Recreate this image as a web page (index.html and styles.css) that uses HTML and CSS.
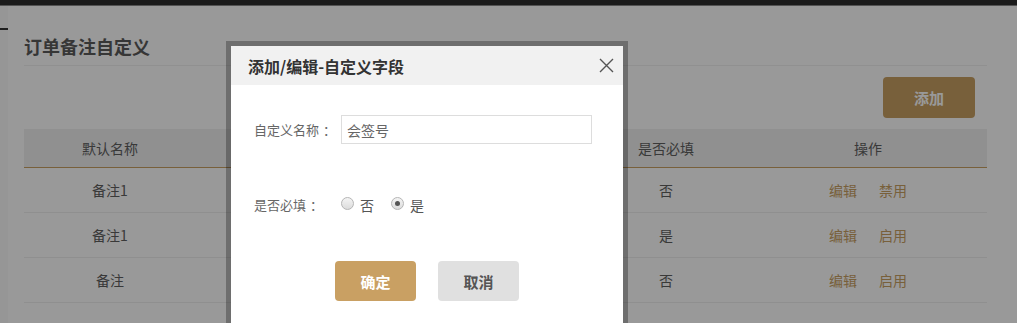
FILE: index.html
```html
<!DOCTYPE html>
<html lang="zh-CN">
<head>
    <meta charset="UTF-8">
    <meta name="viewport" content="width=device-width, initial-scale=1.0">
    <title>订单备注自定义</title>
    <link rel="stylesheet" href="styles.css">
</head>
<body>
    <div class="topbar"></div>

    <div class="layout">
        <aside class="side">
            <div class="side-item"></div>
        </aside>

        <main class="content">
            <h2 class="page-title">订单备注自定义</h2>

            <div class="toolbar">
                <button class="btn btn-add">添加</button>
            </div>

            <!-- middle columns sit under the dialog -->
            <table class="grid">
                <colgroup>
                    <col style="width: 172px">
                    <col style="width: 194px">
                    <col style="width: 193px">
                    <col style="width: 166px">
                    <col>
                </colgroup>
                <thead>
                    <tr>
                        <th>默认名称</th>
                        <th></th>
                        <th></th>
                        <th>是否必填</th>
                        <th>操作</th>
                    </tr>
                </thead>
                <tbody>
                    <tr>
                        <td>备注1</td>
                        <td></td>
                        <td></td>
                        <td>否</td>
                        <td><a class="op" href="#">编辑</a><a class="op" href="#">禁用</a></td>
                    </tr>
                    <tr>
                        <td>备注1</td>
                        <td></td>
                        <td></td>
                        <td>是</td>
                        <td><a class="op" href="#">编辑</a><a class="op" href="#">启用</a></td>
                    </tr>
                    <tr>
                        <td>备注</td>
                        <td></td>
                        <td></td>
                        <td>否</td>
                        <td><a class="op" href="#">编辑</a><a class="op" href="#">启用</a></td>
                    </tr>
                </tbody>
            </table>
        </main>
    </div>

    <!-- modal -->
    <div class="mask"></div>
    <div class="dialog">
        <div class="dialog-head">
            <span class="dialog-title">添加/编辑-自定义字段</span>
            <button class="dialog-close" aria-label="关闭">
                <svg width="15" height="15" viewBox="0 0 15 15">
                    <path d="M1 1 L14 14 M14 1 L1 14" stroke="#555" stroke-width="1.4" fill="none"/>
                </svg>
            </button>
        </div>
        <div class="dialog-body">
            <div class="form-row">
                <label class="form-label" for="custom_name">自定义名称<span class="colon">：</span></label>
                <input class="form-input" type="text" id="custom_name" value="会签号">
            </div>
            <div class="form-row">
                <span class="form-label">是否必填<span class="colon">：</span></span>
                <label class="radio"><input type="radio" name="required"> 否</label>
                <label class="radio"><input type="radio" name="required" checked> 是</label>
            </div>
            <div class="dialog-actions">
                <button class="btn btn-ok">确定</button>
                <button class="btn btn-cancel">取消</button>
            </div>
        </div>
    </div>
</body>
</html>
```

FILE: styles.css
```css
* {
    margin: 0;
    padding: 0;
    box-sizing: border-box;
}

body {
    font-family: "Noto Sans CJK SC", "Noto Sans", sans-serif;
    background: #fff;
    color: #666;
    font-size: 14px;
    overflow: hidden;
}

.topbar {
    height: 6px;
    background: #2e2e2e;
    border-bottom: 1px solid #8a8a8a;
}

.layout {
    display: flex;
    min-height: 317px;
}

.side {
    width: 9px;
    border-right: 1px solid #fff;
    background: #fafafa;
    padding-top: 22px;
}

.side-item {
    height: 2px;
    background: #333;
}

.content {
    flex: 1;
    padding: 28px 30px 0 15px;
}

.page-title {
    font-size: 18px;
    line-height: 24px;
    font-weight: 700;
    color: #5a5a5a;
    padding-bottom: 7px;
    border-bottom: 1px solid #f0f0f0;
}

.toolbar {
    display: flex;
    justify-content: flex-end;
    padding: 11px 12px 0 0;
    margin-bottom: 11px;
}

.btn {
    border: none;
    border-radius: 4px;
    font-family: inherit;
    font-size: 15px;
    font-weight: 700;
    cursor: pointer;
}

.btn-add {
    width: 92px;
    height: 41px;
    background: #c9a063;
    color: #fff;
}

.grid {
    width: 100%;
    border-collapse: collapse;
    table-layout: fixed;
    text-align: center;
}

.grid th {
    height: 38px;
    background: #f0f0f0;
    font-weight: 400;
    color: #606060;
    border-bottom: 1px solid #c9a063;
}

.grid td {
    height: 45px;
    border-bottom: 1px solid #efefef;
    color: #606060;
}

.op {
    color: #c9a063;
    text-decoration: none;
    margin: 0 11px;
}

/* modal */
.mask {
    position: fixed;
    inset: 0;
    background: rgba(0, 0, 0, 0.4);
}

.dialog {
    position: absolute;
    left: 226px;
    top: 41px;
    width: 402px;
    height: 320px;
    border: 5px solid rgba(0, 0, 0, 0.28);
    background-clip: padding-box;
    background-color: #fff;
}

.dialog-head {
    height: 39px;
    background: #f1f1f1;
    display: flex;
    align-items: center;
    justify-content: space-between;
    padding: 0 9px 0 17px;
}

.dialog-title {
    font-size: 16px;
    font-weight: 700;
    color: #333;
}

.dialog-close {
    border: none;
    background: none;
    display: flex;
    cursor: pointer;
}

.dialog-body {
    padding: 30px 0 0 23px;
}

.form-row {
    display: flex;
    align-items: center;
    height: 29px;
    margin-bottom: 46px;
}

.form-label {
    width: 87px;
    font-size: 13px;
    color: #666;
}

.colon {
    display: inline-block;
    padding-left: 4px;
}

.form-input {
    width: 251px;
    height: 29px;
    border: 1px solid #ddd;
    padding: 0 5px;
    font-family: inherit;
    font-size: 14px;
    color: #666;
    outline: none;
}

.radio {
    display: flex;
    align-items: center;
    gap: 6px;
    font-size: 14px;
    color: #555;
    margin-right: 17px;
}

.radio input {
    appearance: none;
    width: 13px;
    height: 13px;
    border: 1px solid #b5b5b5;
    border-radius: 50%;
    background: linear-gradient(#f4f4f4, #dcdcdc);
    margin-top: -2px;
    position: relative;
}

.radio input:checked::after {
    content: '';
    position: absolute;
    left: 3px;
    top: 3px;
    width: 5px;
    height: 5px;
    border-radius: 50%;
    background: #555;
}

.dialog-actions {
    display: flex;
    justify-content: center;
    gap: 22px;
    margin: -4px 0 0 -23px;
}

.btn-ok,
.btn-cancel {
    width: 81px;
    height: 40px;
}

.btn-ok {
    background: #c9a063;
    color: #fff;
}

.btn-cancel {
    background: #e0e0e0;
    color: #555;
}
```
